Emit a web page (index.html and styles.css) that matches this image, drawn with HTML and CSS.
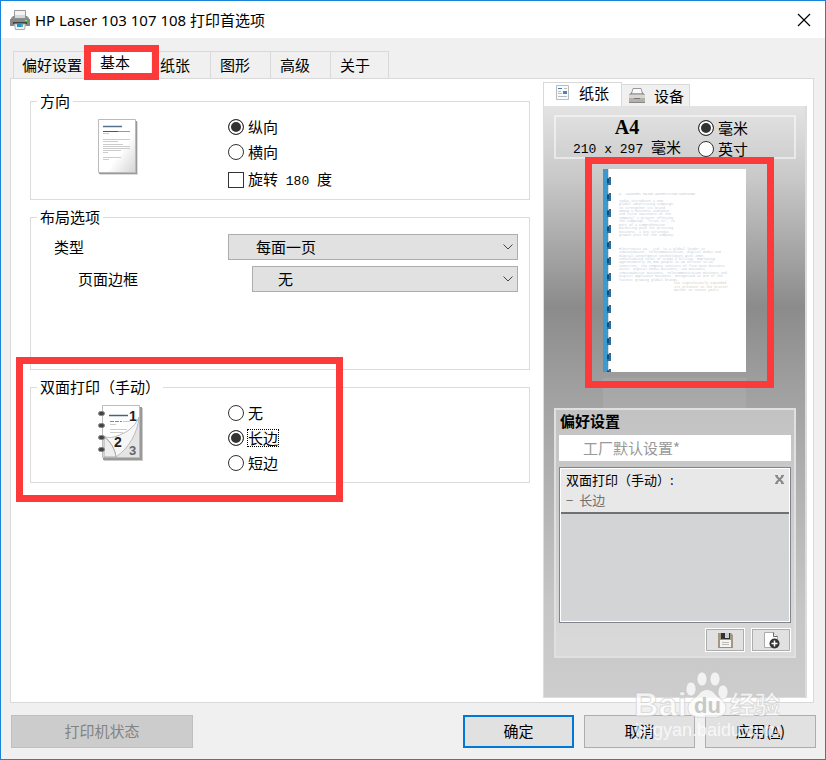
FILE: index.html
```
<!DOCTYPE html>
<html lang="zh-CN">
<head>
    <meta charset="UTF-8">
    <meta name="viewport" content="width=device-width, initial-scale=1.0">
    <title>HP Laser 103 107 108 打印首选项</title>
    <link rel="stylesheet" href="styles.css">
</head>
<body>
<div class="window">
    <header class="titlebar">
        <svg class="title-icon" width="20" height="20" viewBox="0 0 20 20">
            <path d="M4.500 8V.5h11V8" fill="#f4f4f4" stroke="#999"/>
            <path d="M1 8l2-2h14l2 2v3H1z" fill="#8c8f90"/>
            <path d="M5 5h10v3H5z" fill="#d5d7d8"/>
            <path d="M0 9h20v7H0z" fill="#85898a"/>
            <path d="M3 12h14v2H3z" fill="#444"/>
            <path d="M15 10h2v1h-2z" fill="#6f6"/>
            <path d="M4.500 14h11l-1 5.500h-9z" fill="#eef3f5" stroke="#aaa"/>
            <path d="M7 14h4v3H7z" fill="#2690c8"/>
            <path d="M11 14h2v3h-2z" fill="#58b090"/>
        </svg>
        <h1>HP Laser 103 107 108 打印首选项</h1>
        <button class="close" type="button" aria-label="关闭">
            <svg width="14" height="14" viewBox="0 0 14 14"><path d="M1 1l12 12M13 1L1 13" stroke="#000" stroke-width="1.200"/></svg>
        </button>
    </header>

    <nav class="tabs">
        <button class="tab tab-wide" type="button">偏好设置</button>
        <button class="tab active" type="button">基本<span class="mark"></span></button>
        <button class="tab" type="button">纸张</button>
        <button class="tab" type="button">图形</button>
        <button class="tab" type="button">高级</button>
        <button class="tab" type="button">关于</button>
    </nav>

    <main class="panel">
        <form class="settings">
            <fieldset class="group">
                <legend>方向</legend>
                <div class="group-row">
                    <div class="picture">
                        <svg width="44" height="57" viewBox="0 0 44 57">
                            <defs>
                                <linearGradient id="sheet" x1="0" y1="0" x2="1" y2="1">
                                    <stop offset="0.600" stop-color="#fff"/>
                                    <stop offset="1" stop-color="#d4d4d4"/>
                                </linearGradient>
                            </defs>
                            <path d="M3 3h38v53H3z" fill="#ddd"/>
                            <path d="M2 2h38v53H2z" fill="#999"/>
                            <path d="M1.500 .5h37v53h-37z" fill="url(#sheet)" stroke="#bbb"/>
                            <path d="M6 7.500h19" stroke="#54718b" stroke-width="1.500"/>
                            <path d="M6 12.500h15" stroke="#555"/>
                            <path d="M21 12.500h12" stroke="#999"/>
                            <path d="M6 14.500h6M6 20.500h27M6 22.500h15M6 25.500h20M6 27.500h27M6 29.500h27M6 31.500h18M6 33.500h5M6 38.500h18M6 40.500h6" stroke="#ccc"/>
                        </svg>
                    </div>
                    <div class="options">
                        <label><input type="radio" name="orientation" checked>纵向</label>
                        <label><input type="radio" name="orientation">横向</label>
                        <label class="rotate"><input type="checkbox"><span>旋转<span class="num"> 180 </span>度</span></label>
                    </div>
                </div>
            </fieldset>

            <fieldset class="group group-layout">
                <legend>布局选项</legend>
                <div class="field">
                    <label for="layout-type">类型</label>
                    <div class="select">
                        <select id="layout-type"><option>每面一页</option></select>
                        <svg width="10" height="6" viewBox="0 0 10 6"><path d="M.5 .5L5 5l4.500-4.500" fill="none" stroke="#444"/></svg>
                    </div>
                </div>
                <div class="field field-sub">
                    <label for="page-border">页面边框</label>
                    <div class="select">
                        <select id="page-border"><option>无</option></select>
                        <svg width="10" height="6" viewBox="0 0 10 6"><path d="M.5 .5L5 5l4.500-4.500" fill="none" stroke="#444"/></svg>
                    </div>
                </div>
            </fieldset>

            <fieldset class="group group-duplex">
                <legend>双面打印（手动）</legend>
                <div class="group-row">
                    <div class="picture">
                        <svg width="48" height="57" viewBox="0 0 48 57">
                            <path d="M7 3h39v53H7z" fill="#ccc"/>
                            <path d="M6 2h39v53H6z" fill="#999"/>
                            <path d="M5.500 .5h37v52h-37z" fill="#fff" stroke="#bbb"/>
                            <path d="M42 14v38H19z" fill="#e4e4e4"/>
                            <path d="M12 10.500h19" stroke="#3f6684" stroke-width="1.500"/>
                            <path d="M13 16.500h12" stroke="#888" stroke-dasharray="4 1"/>
                            <path d="M26 16.500h7M13 19.500h6M13 24.500h17M13 27.500h13" stroke="#ccc"/>
                            <path d="M7 31c3 2 8 2 13 0 8-3 17-7 22-19-1 15-10 31-23 40-1-8-6-16-12-21z" fill="#f6f6f6" stroke="#bbb"/>
                            <path d="M7 32c6 4 11 12 12 20H7z" fill="#eee" stroke="#aaa"/>
                            <text class="page-no" x="32" y="16">1</text>
                            <text class="page-no" x="17" y="42">2</text>
                            <text class="page-no page-no-back" x="32" y="50">3</text>
                            <g fill="#444" stroke="#888">
                                <rect x="1.500" y="6.500" width="6" height="4" rx="2"/>
                                <rect x="1.500" y="18.500" width="6" height="4" rx="2"/>
                                <rect x="1.500" y="30.500" width="6" height="4" rx="2"/>
                                <rect x="1.500" y="42.500" width="6" height="4" rx="2"/>
                            </g>
                        </svg>
                    </div>
                    <div class="options">
                        <label><input type="radio" name="duplex">无</label>
                        <label><input type="radio" name="duplex" checked><span class="focused">长边</span></label>
                        <label><input type="radio" name="duplex">短边</label>
                    </div>
                </div>
                <span class="mark"></span>
            </fieldset>
        </form>

        <aside class="side">
            <div class="side-tabs">
                <button class="side-tab active" type="button">
                    <svg width="16" height="16" viewBox="0 0 16 16">
                        <path d="M1.500 .5h12v14h-12z" fill="#f8fafc" stroke="#bbb"/>
                        <path d="M3 3.500h4" stroke="#3f78b0"/>
                        <path d="M3 6.500h3M3 8.500h4M3 11.500h9M9 3.500h3" stroke="#b5bdc5"/>
                        <path d="M8 6h4v3H8z" fill="#4a85bd"/>
                    </svg>
                    纸张
                </button>
                <button class="side-tab" type="button">
                    <svg width="18" height="16" viewBox="0 0 18 16">
                        <path d="M1 7l3-3h10l3 3z" fill="#555"/>
                        <path d="M3.500 5.500l1.500-5h8l1.500 5" fill="#fafafa" stroke="#999"/>
                        <path d="M1 6h16v9H1z" fill="#b4b0ac"/>
                        <path d="M1 7h16v3H1z" fill="#d8d5d2"/>
                        <path d="M6 10.500h6" stroke="#777"/>
                        <path d="M1 14.500h16" stroke="#888"/>
                    </svg>
                    设备
                </button>
            </div>
            <div class="side-body">
                <div class="paper-info">
                    <div class="paper-size">
                        <strong>A4</strong>
                        <span><span class="num">210 x 297 </span>毫米</span>
                    </div>
                    <div class="units">
                        <label><input type="radio" name="unit" checked>毫米</label>
                        <label><input type="radio" name="unit">英寸</label>
                    </div>
                </div>

                <div class="preview">
                    <div class="sheet">
                        <svg width="143" height="203" viewBox="0 0 429 609">
                            <defs>
                                <pattern id="ring" width="30" height="48" patternUnits="userSpaceOnUse">
                                    <path d="M15 0h3v48h-3z" fill="#ddd"/>
                                    <path d="M12 28l6-2v-2h6v24H12z" fill="#2d6e9b"/>
                                    <path d="M12 30h6v12h-6z" fill="#164c72"/>
                                </pattern>
                            </defs>
                            <rect width="12" height="609" fill="#3d9ad0"/>
                            <rect x="12" width="3" height="609" fill="#6d8797"/>
                            <rect width="30" height="609" fill="url(#ring)"/>
                            <g class="sheet-text">
                                <text x="48" y="77">A. LAUNCHES MAJOR ADVERTISING CAMPAIGN</text>
                                <text x="48" y="98">today introduces a new</text>
                                <text x="48" y="108">global advertising campaign</text>
                                <text x="48" y="119">to strengthen its brand</text>
                                <text x="48" y="129">among a business audience</text>
                                <text x="48" y="139">and raise awareness of the</text>
                                <text x="48" y="150">company' s printer offering.</text>
                                <text x="48" y="160">The campaign, "Print It", is</text>
                                <text x="48" y="170">part of a comprehensive</text>
                                <text x="48" y="181">marketing push for printing</text>
                                <text x="48" y="191">business, a key strategic</text>
                                <text x="48" y="201">growth area for the company.</text>
                                <text x="48" y="242">Electronics Co., Ltd. is a global leader in</text>
                                <text x="48" y="252">semiconductor, telecommunication, digital media and</text>
                                <text x="48" y="263">digital convergence technologies with 2003</text>
                                <text x="48" y="273">consolidated sales of US$36.4 billion. Employing</text>
                                <text x="48" y="283">approximately 88,000 people in 89 offices in 46</text>
                                <text x="48" y="294">countries, the company consists of five main business</text>
                                <text x="48" y="304">units: Digital Media Business, LCD Business,</text>
                                <text x="48" y="314">Semiconductor Business, Telecommunication Business and</text>
                                <text x="48" y="325">Digital Appliance Business. Recognized as one of the</text>
                                <text x="48" y="335">fastest growing global brands.</text>
                                <text x="214" y="345">has significantly expanded</text>
                                <text x="214" y="356">its presence in the printer</text>
                                <text x="214" y="366">market in recent years.</text>
                            </g>
                        </svg>
                    </div>
                    <div class="reflection"></div>
                    <span class="mark"></span>
                </div>

                <div class="presets">
                    <label class="presets-title" for="preset">偏好设置</label>
                    <input class="preset-name" id="preset" type="text" value="工厂默认设置*" readonly>
                    <div class="preset-list">
                        <div class="preset-item">
                            <div class="preset-head">
                                <span>双面打印（手动）:</span>
                                <button class="remove" type="button" aria-label="删除">
                                    <svg width="9" height="9" viewBox="0 0 9 9"><path d="M1 1l7 7M8 1L1 8" stroke="#888" stroke-width="2"/><path d="M0 .5h3M6 .5h3M0 8.500h3M6 8.500h3" stroke="#888"/></svg>
                                </button>
                            </div>
                            <div class="preset-value"><span>−</span>长边</div>
                        </div>
                    </div>
                    <div class="preset-actions">
                        <button type="button" aria-label="保存">
                            <svg width="15" height="15" viewBox="0 0 15 15">
                                <path d="M0 0h13l2 2v13H0z" fill="#a39788"/>
                                <path d="M3 0h9v6H3z" fill="#333"/>
                                <path d="M7 0h4v5H7z" fill="#c8d0d0"/>
                                <path d="M2 7h11v7H2z" fill="#f6f4ef"/>
                                <path d="M4 9.500h7M4 11.500h7" stroke="#bbb"/>
                                <path d="M1 14.500h13" stroke="#bd8c30"/>
                            </svg>
                        </button>
                        <button type="button" aria-label="添加">
                            <svg width="17" height="17" viewBox="0 0 17 17">
                                <path d="M1.500 .5h9l4 4v11h-13z" fill="#fff" stroke="#aaa"/>
                                <path d="M10.500 .5v4h4" fill="#eee" stroke="#666"/>
                                <circle cx="11.500" cy="11.500" r="5" fill="#333"/>
                                <path d="M11.500 8.500v6M8.500 11.500h6" stroke="#fff" stroke-width="1.500"/>
                            </svg>
                        </button>
                    </div>
                </div>
            </div>
        </aside>
    </main>

    <footer class="footer">
        <button class="btn btn-status" type="button" disabled>打印机状态</button>
        <button class="btn btn-ok" type="button">确定</button>
        <button class="btn" type="button">取消</button>
        <button class="btn" type="button">应用(<u>A</u>)</button>
    </footer>

    <svg class="watermark" width="158" height="76" viewBox="0 0 158 76">
        <g class="watermark-logo">
            <text class="logo-latin" x="0" y="45">Bai</text>
            <ellipse cx="57" cy="18" rx="5" ry="7"/>
            <ellipse cx="68" cy="8" rx="5" ry="7"/>
            <ellipse cx="81" cy="8" rx="5" ry="7"/>
            <ellipse cx="89" cy="21" rx="5" ry="7"/>
            <path d="M54 37c0-7 7-9 11-14 4-6 12-6 16 0 4 5 11 7 11 14 0 9-8 10-19 9-11 1-19 0-19-9z"/>
            <text class="logo-cjk" x="96" y="43">经验</text>
        </g>
        <text class="logo-du" x="60" y="42">du</text>
        <text class="logo-url" x="1" y="65">jingyan.baidu.com</text>
    </svg>
</div>
</body>
</html>
```
FILE: styles.css
```
* {
    box-sizing: border-box;
}
body {
    margin: 0;
    font-family: "Noto Sans CJK SC", sans-serif;
    font-size: 15px;
    line-height: 20px;
    color: #000;
}
button, input, select {
    font: inherit;
    color: inherit;
    margin: 0;
}
button {
    padding: 0;
}
svg {
    display: block;
}
.window {
    position: relative;
    display: flex;
    flex-direction: column;
    min-height: 100vh;
    border: 1px solid #1883d7;
    background-color: #f0f0f0;
}

/* title bar */
.titlebar {
    display: flex;
    align-items: center;
    gap: 5px;
    height: 37px;
    padding: 0 14px 0 9px;
    background-color: #fff;
}
.titlebar h1 {
    flex: 1;
    margin: 0;
    font-family: "Noto Sans", "Noto Sans CJK SC", sans-serif;
    font-size: 15px;
    font-weight: normal;
}
.close {
    border: none;
    background: none;
}

/* red frame round the places to look at */
.mark {
    position: absolute;
    border: 7px solid #fc3a3a;
    pointer-events: none;
}

/* tabs */
.tabs {
    display: flex;
    align-items: flex-end;
    height: 40px;
    padding-left: 12px;
}
.tab {
    width: 60px;
    height: 27px;
    padding: 0 0 0 9px;
    border: 1px solid #d9d9d9;
    border-width: 1px 1px 0 0;
    background-color: #f0f0f0;
    text-align: left;
}
.tab:last-child {
    width: 58px;
}
.tab-wide {
    width: 78px;
    padding-left: 8px;
    border-left-width: 1px;
}
.tab.active {
    position: relative;
    z-index: 1;
    height: 29px;
    padding: 0 0 4px 9px;
    border: none;
    background-color: #fff;
}
.tab.active .mark {
    inset: -4px -8px -2px -7px;
}

/* main panel */
.panel {
    flex: 1;
    display: flex;
    gap: 13px;
    margin: 0 11px 0 9px;
    padding: 3px 6px 4px 19px;
    border: 1px solid #d9d9d9;
    background-color: #fff;
}
.settings {
    flex: 1;
    display: flex;
    flex-direction: column;
    gap: 7px;
    padding-top: 9px;
}
.group {
    position: relative;
    min-width: 0;
    margin: 0;
    padding: 4px 11px 7px 0;
    border: 1px solid #dcdcdc;
}
.group legend {
    margin-left: 6px;
    padding: 0 3px;
}
.group-layout {
    min-height: 163px;
    padding-top: 7px;
}
.group-duplex .mark {
    inset: -40px 186px -20px -15px;
}
.group-row {
    display: flex;
}
.picture {
    width: 197px;
    padding: 4px 0 0 66px;
}
.options {
    display: flex;
    flex-direction: column;
    gap: 1px;
}
.options label, .units label {
    display: flex;
    align-items: center;
    gap: 4px;
    height: 24px;
    white-space: pre;
}
.options .rotate {
    margin-top: 3px;
}
.focused {
    outline: 1px dotted #000;
    line-height: 16px;
}
.num {
    font-family: "Liberation Mono", monospace;
    font-size: 13px;
    white-space: pre;
}
input[type="radio"], input[type="checkbox"] {
    appearance: none;
    width: 16px;
    height: 16px;
    border: 1px solid #333;
    background-color: #fff;
}
input[type="radio"] {
    border-radius: 50%;
}
input[type="radio"]:checked {
    background-color: #333;
    box-shadow: inset 0 0 0 2px #fff;
}
.page-no {
    font-family: "Liberation Sans", sans-serif;
    font-size: 14px;
    font-weight: bold;
    fill: #222;
}
.page-no-back {
    font-size: 13px;
    fill: #666;
}

/* layout options */
.field {
    display: flex;
    align-items: center;
    margin-bottom: 6px;
    padding-left: 23px;
}
.field label {
    width: 174px;
}
.field-sub {
    padding-left: 47px;
}
.select {
    position: relative;
    flex: 1;
}
.select select {
    appearance: none;
    display: block;
    width: 100%;
    height: 26px;
    padding: 0 27px;
    border: 1px solid #adadad;
    border-radius: 0;
    background-color: #e1e1e1;
}
.field-sub .select select {
    padding-left: 25px;
}
.select svg {
    position: absolute;
    right: 5px;
    top: 10px;
    pointer-events: none;
}

/* side column */
.side {
    display: flex;
    flex-direction: column;
    width: 264px;
}
.side-tabs {
    display: flex;
    align-items: flex-end;
}
.side-tab {
    display: flex;
    align-items: center;
    gap: 8px;
    width: 68px;
    height: 22px;
    padding: 0 0 0 6px;
    border: 1px solid #d9d9d9;
    border-width: 1px 1px 0 0;
    background-color: #f0f0f0;
}
.side-tab.active {
    width: 79px;
    height: 24px;
    padding: 0 0 4px 11px;
    border-left-width: 1px;
    background-color: #fff;
}
.side-body {
    flex: 1;
    display: flex;
    flex-direction: column;
    padding: 9px 9px 39px 10px;
    border: 1px solid #dcdcdc;
    border-width: 0 2px 1px 1px;
    background: linear-gradient(#e3e3e3, #c9c9c9 12%, #8b8b8b 34%, #a0a0a0 48%, #c6c6c6 85%, #cdcdcd);
}
.paper-info {
    display: flex;
    height: 44px;
    border: 2px solid rgba(255, 255, 255, 0.5);
}
.paper-size {
    display: flex;
    flex-direction: column;
    align-items: center;
    width: 142px;
}
.paper-size strong {
    font-family: "Liberation Serif", serif;
    font-size: 20px;
}
.units label {
    height: 21px;
}
.preview {
    position: relative;
    flex: 1;
    display: flex;
    flex-direction: column;
    padding: 10px 0 0 49px;
}
.preview .mark {
    inset: -2px 22px 20px 31px;
}
.sheet {
    width: 143px;
    background-color: #fff;
}
.sheet-text {
    font-family: "Liberation Mono", monospace;
    font-size: 10px;
    fill: #ccc;
}
.reflection {
    flex: 1;
    width: 143px;
    margin-top: 6px;
    background-color: rgba(255, 255, 255, 0.08);
}

/* presets */
.presets {
    height: 250px;
    padding: 0 3px;
    border: 2px solid #e0e0e0;
    background: linear-gradient(#c2c2c2, #dadada);
}
.presets-title {
    display: block;
    height: 25px;
    padding-left: 1px;
    font-size: 15px;
    font-weight: bold;
    line-height: 22px;
}
.preset-name {
    display: block;
    width: 100%;
    height: 26px;
    padding: 0 24px 2px;
    border: none;
    background-color: #fff;
    color: #999;
}
.preset-list {
    height: 156px;
    margin: 6px 0 5px;
    padding: 1px;
    border: 1px solid #83838b;
    background-color: #d3d4d6;
    box-shadow: inset 0 0 0 1px #fff;
}
.preset-item {
    height: 45px;
    padding: 0 5px;
    border-bottom: 2px solid #707070;
    background-color: #e8e8e8;
    font-size: 13px;
}
.preset-head {
    display: flex;
    justify-content: space-between;
    align-items: center;
    height: 21px;
}
.remove {
    border: none;
    background: none;
}
.preset-value {
    display: flex;
    gap: 6px;
    color: #707070;
}
.preset-actions {
    display: flex;
    justify-content: flex-end;
    gap: 6px;
}
.preset-actions button {
    display: flex;
    justify-content: center;
    align-items: center;
    width: 40px;
    height: 24px;
    border: 1px solid #fff;
    background-color: #e1e1e1;
    box-shadow: inset 0 0 0 1px #adadad;
}

/* footer */
.footer {
    display: flex;
    gap: 10px;
    padding: 12px 9px 11px 10px;
}
.btn {
    width: 111px;
    height: 33px;
    padding-bottom: 2px;
    border: 1px solid #adadad;
    background-color: #e1e1e1;
}
.btn-ok {
    border: 2px solid #0078d7;
}
.btn-status {
    width: 182px;
    margin-right: auto;
    border-color: #bfbfbf;
    background-color: #ccc;
    color: #838383;
}

/* watermark */
.watermark {
    position: absolute;
    right: 33px;
    bottom: 12px;
    overflow: visible;
    pointer-events: none;
}
.watermark-logo {
    fill: rgba(255, 255, 255, 0.75);
    stroke: rgba(190, 190, 190, 0.5);
    stroke-width: 1;
}
.logo-latin {
    font-family: "Liberation Sans", sans-serif;
    font-size: 34px;
    font-weight: bold;
}
.logo-cjk {
    font-family: "Noto Sans CJK SC", sans-serif;
    font-size: 25px;
    font-weight: bold;
}
.logo-du {
    font-family: "Liberation Sans", sans-serif;
    font-size: 22px;
    font-weight: bold;
    fill: #c8c8c8;
}
.logo-url {
    font-family: "Liberation Sans", sans-serif;
    font-size: 18px;
    fill: rgba(255, 255, 255, 0.75);
}
```
